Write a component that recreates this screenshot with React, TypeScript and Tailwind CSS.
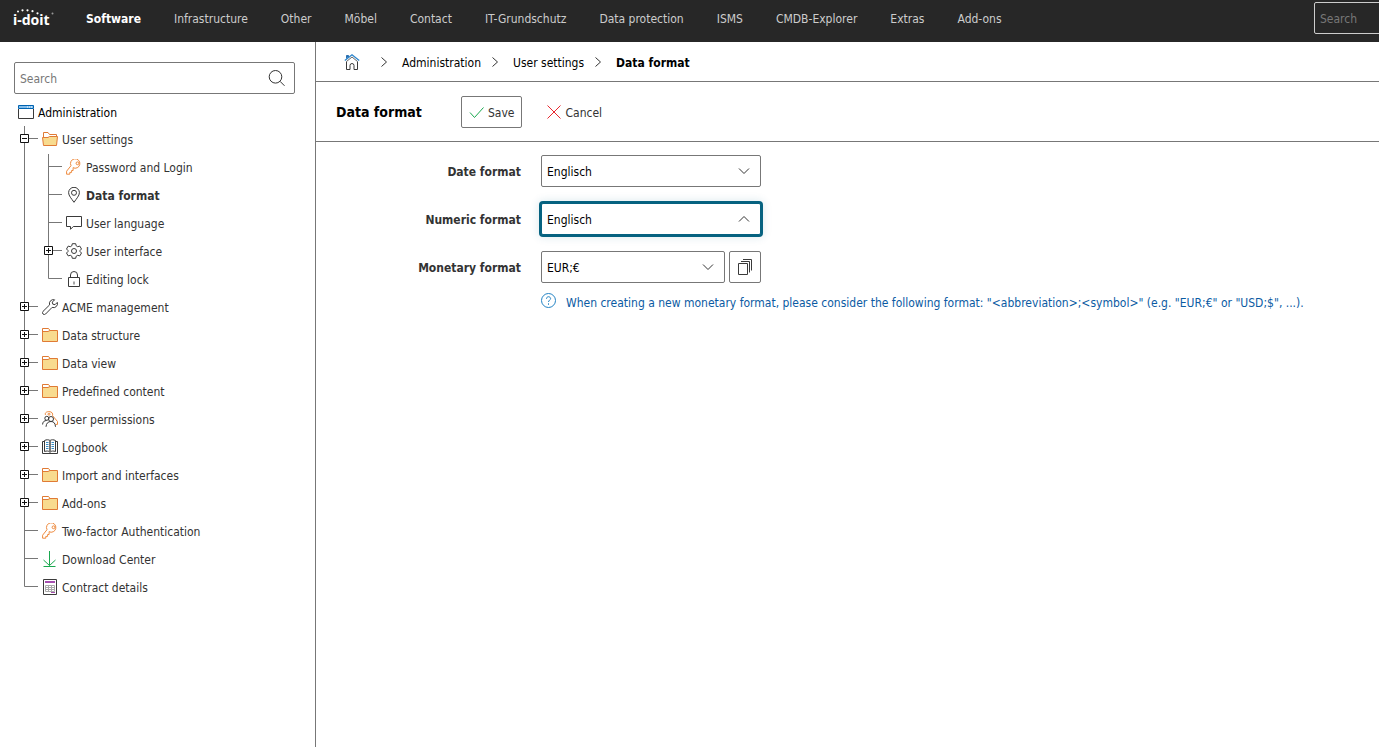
import { useState, type ReactNode } from "react";

const navItems = [
  "Software",
  "Infrastructure",
  "Other",
  "Möbel",
  "Contact",
  "IT-Grundschutz",
  "Data protection",
  "ISMS",
  "CMDB-Explorer",
  "Extras",
  "Add-ons",
];

function Icon({ children, stroke = "#3a3a3a" }: { children: ReactNode; stroke?: string }) {
  return (
    <svg
      className="size-4 shrink-0"
      viewBox="0 0 16 16"
      fill="none"
      stroke={stroke}
      aria-hidden="true"
    >
      {children}
    </svg>
  );
}

const WindowIcon = () => (
  <Icon>
    <path d="M.5 5v9.500h15V5" />
    <path d="M.5 1.500h15v3H.5z" fill="#83beec" stroke="#0063b1" />
    <path d="M9 3h1M11 3h1M13 3h1" stroke="#fff" />
  </Icon>
);
const FolderIcon = () => (
  <Icon stroke="#e07a35">
    <path d="M.5 14.500v-13h6l1.500 2h7.500v11z" fill="#f8db8f" />
    <path d="M1 2h5.300l1 1.500L6 4.500H1z" fill="#fff" stroke="none" />
    <path d="M.5 4.500h5.500l2-1" />
  </Icon>
);
const OpenFolderIcon = () => (
  <Icon stroke="#e07a35">
    <path d="M1.500 6V1.500h4.500l1.500 2h7V6" fill="#fff" />
    <path d="M.5 6.500h5.500l1.500-1h8l-1 9h-13z" fill="#f8db8f" />
  </Icon>
);
const KeyIcon = () => (
  <Icon stroke="#ee8a3e">
    <path d="M7 8.700a4.700 4.700 0 1 0-2-2L.6 12.200v3h3.200v-1.800h1.800v-1.900h1.500V9.600z" strokeLinejoin="round" />
    <circle cx="11.500" cy="4.300" r="1.400" />
  </Icon>
);
const PinIcon = () => (
  <Icon>
    <path d="M8 15.300C5.500 11.600 2.600 8.700 2.600 5.700a5.400 5.400 0 0 1 10.800 0c0 3-2.900 5.900-5.400 9.600z" />
    <circle cx="8" cy="5.800" r="2.500" />
  </Icon>
);
const SpeechIcon = () => (
  <Icon>
    <path d="M.5 1.500h15v10H7.300L4.500 14.300v-2.800h-4z" />
  </Icon>
);
const GearIcon = () => (
  <Icon>
    <path d="M6.300.7h3.400l.5 2.100 1.500.9 2.100-.6 1.700 2.900L14 7.500v1l1.500 1.500-1.700 2.900-2.100-.6-1.500.9-.5 2.100H6.300l-.5-2.100-1.500-.9-2.100.6L.5 10 2 8.500v-1L.5 6l1.700-2.900 2.100.6 1.500-.9z" strokeLinejoin="round" />
    <circle cx="8" cy="8" r="2.500" />
  </Icon>
);
const LockIcon = () => (
  <Icon>
    <path d="M2.500 6.500h11v9h-11z" />
    <path d="M4.500 6.500V4a3.500 3.500 0 0 1 7 0v2.500" />
    <path d="M8 10.500v3" stroke="#888" strokeWidth="1.500" />
  </Icon>
);
const WrenchIcon = () => (
  <Icon>
    <path
      d="M12.600.8a4 4 0 0 0-5 5.100L1 12.400a1.800 1.800 0 0 0 2.600 2.600l6.500-6.600a4 4 0 0 0 5.200-5L13 5.700l-2.200-.5-.5-2.100z"
      strokeLinejoin="round"
    />
  </Icon>
);
const PermissionsIcon = () => (
  <Icon>
    <path d="M3.500 4C2.500 1.500 5 .6 7 .6c3 0 4.200 2 3.500 4l5 5.900v2.900h-2" stroke="#ee8a3e" />
    <circle cx="7" cy="3.200" r="1" stroke="#ee8a3e" />
    <circle cx="4.800" cy="7.300" r="2" />
    <circle cx="9" cy="8" r="2.500" />
    <path d="M.6 13.500c0-2.500 1.600-4 4-4M4 15.800c.3-3.500 2-5.300 5-5.300s4.200 1.800 4.500 5.300" />
  </Icon>
);
const BookIcon = () => (
  <Icon>
    <path d="M2.500 2.500h-2v12h15v-12h-2" />
    <path d="M2.500 1.500c2-1 4-1 5.500 0 1.500-1 3.500-1 5.500 0v11c-2-.7-4-.7-5.500.5-1.500-1.200-3.500-1.200-5.500-.5z" fill="#fff" />
    <path d="M7.500 1.500v12M8.500 1.500v12" stroke="#777" />
    <path d="M4 3.500h2.500M4 5.500h2.500M4 7.500h2.500M4 9.500h2.500M9.500 3.500H12M9.500 5.500H12M9.500 7.500H12M9.500 9.500H12" stroke="#3a8fc8" />
  </Icon>
);
const DownloadIcon = () => (
  <Icon stroke="#1aa84f">
    <path d="M7.500 0v14.500M1.500 9l6 5.500 6-5.500M1.500 15.500h12" />
  </Icon>
);
const ContractIcon = () => (
  <Icon>
    <path d="M1.500.5h13v15h-13z" />
    <path d="M3 3h10" stroke="#a54fb0" strokeWidth="2" />
    <path d="M3.500 6.500h9v6h-9zM3.500 8.500h9M3.500 10.500h9M6.500 6.500v6M9.500 6.500v6" stroke="#aaa" />
    <path d="M9 13.500h4" stroke="#a54fb0" />
  </Icon>
);
const HomeIcon = () => (
  <Icon>
    <path d="M2.500 7.500v8h3.500v-4a2 2 0 0 1 4 0v4h3.500v-8" />
    <path d="M2.500 4.500v-3h2V3" stroke="#2a6fb0" fill="#2a6fb0" />
    <path d="M.8 6.500L8 .8l7.200 5.700" stroke="#2f86cc" strokeWidth="1.300" />
    <path d="M2.500 7.500L8 3l5.500 4.500" stroke="#666" />
  </Icon>
);
const CopyIcon = () => (
  <Icon>
    <path d="M1.500 4.500h9v11h-9zM4 2.500h8.500v11M6 .5h8.500v11" />
  </Icon>
);
const HelpIcon = () => (
  <Icon stroke="#2383c4">
    <circle cx="7.500" cy="7.500" r="7" />
    <path d="M5.500 5.800c0-1.300.9-2.100 2-2.100s2.100.8 2.100 1.900c0 1.500-2.100 1.600-2.100 3.400M7.500 10.300v1.500" />
  </Icon>
);
const CrumbChevron = () => (
  <svg className="h-4 w-2 shrink-0" viewBox="0 0 8 16" fill="none" stroke="#333" aria-hidden="true">
    <path d="M1.500 3.500l5 4.500-5 4.500" />
  </svg>
);

type Node = { label: string; icon: ReactNode; state?: "open" | "closed"; children?: Node[] };

const tree: Node[] = [
  {
    label: "User settings",
    icon: <OpenFolderIcon />,
    state: "open",
    children: [
      { label: "Password and Login", icon: <KeyIcon /> },
      { label: "Data format", icon: <PinIcon /> },
      { label: "User language", icon: <SpeechIcon /> },
      { label: "User interface", icon: <GearIcon />, state: "closed" },
      { label: "Editing lock", icon: <LockIcon /> },
    ],
  },
  { label: "ACME management", icon: <WrenchIcon />, state: "closed" },
  { label: "Data structure", icon: <FolderIcon />, state: "closed" },
  { label: "Data view", icon: <FolderIcon />, state: "closed" },
  { label: "Predefined content", icon: <FolderIcon />, state: "closed" },
  { label: "User permissions", icon: <PermissionsIcon />, state: "closed" },
  { label: "Logbook", icon: <BookIcon />, state: "closed" },
  { label: "Import and interfaces", icon: <FolderIcon />, state: "closed" },
  { label: "Add-ons", icon: <FolderIcon />, state: "closed" },
  { label: "Two-factor Authentication", icon: <KeyIcon /> },
  { label: "Download Center", icon: <DownloadIcon /> },
  { label: "Contract details", icon: <ContractIcon /> },
];

function Branch({ nodes }: { nodes: Node[] }) {
  return (
    <ul>
      {nodes.map((node, index) => (
        <TreeItem key={node.label} node={node} last={index === nodes.length - 1} />
      ))}
    </ul>
  );
}

function TreeItem({ node, last }: { node: Node; last: boolean }) {
  const [open, setOpen] = useState(node.state === "open");
  const active = node.label === "Data format";
  return (
    <li>
      <div className="flex h-7">
        <span className="relative h-7 w-6 shrink-0">
          <svg className="size-full" viewBox="0 0 24 28" fill="none" stroke="#777" aria-hidden="true">
            <path d={last ? "M6.500 0v12.500H20" : "M6.500 0v28M6.500 12.500H20"} />
          </svg>
          {node.state && (
            <button
              type="button"
              aria-label={`${open ? "Collapse" : "Expand"} ${node.label}`}
              onClick={() => setOpen(!open)}
              className="absolute top-2 left-0.5 size-[9px] bg-white"
            >
              <svg className="block size-[9px]" viewBox="0 0 9 9" fill="none" stroke="#111" aria-hidden="true">
                <path d={open ? "M.5.5h8v8h-8zM2 4.500h5" : "M.5.5h8v8h-8zM2 4.500h5M4.500 2v5"} />
              </svg>
            </button>
          )}
        </span>
        <a href="#" className="flex items-center gap-1 pb-0.5">
          {node.icon}
          <span className={active ? "pt-0.5 font-bold" : "pt-0.5"}>{node.label}</span>
        </a>
      </div>
      {node.children && open && (
        <div className={last ? "ml-6" : "ml-1.5 border-l border-[#777] pl-[17px]"}>
          <Branch nodes={node.children} />
        </div>
      )}
    </li>
  );
}

function Select({ id, value, open = false }: { id: string; value: string; open?: boolean }) {
  return (
    <div className="relative flex-1">
      <select
        id={id}
        className={
          open
            ? "block h-8 w-full appearance-none rounded-[2px] border border-[#066280] bg-white pt-0.5 pr-8 pl-[5px] text-black shadow-[0_0_8px_3px_#0662801f] ring-2 ring-[#066280] outline-none"
            : "block h-8 w-full appearance-none rounded-[2px] border border-[#777] bg-white pt-0.5 pr-8 pl-[5px] text-black"
        }
      >
        <option>{value}</option>
      </select>
      <svg
        className="pointer-events-none absolute top-2 right-[9px] size-4"
        viewBox="0 0 16 16"
        fill="none"
        stroke="#333"
        aria-hidden="true"
      >
        <path d={open ? "M3 10.500l5-5 5 5" : "M3 5.500l5 5 5-5"} />
      </svg>
    </div>
  );
}

function Field({ id, label, children }: { id: string; label: string; children: ReactNode }) {
  return (
    <div className="flex items-center gap-5">
      <label htmlFor={id} className="w-[205px] shrink-0 pt-px text-right font-bold">
        {label}
      </label>
      <div className="flex w-[220px] gap-1">{children}</div>
    </div>
  );
}

export default function App() {
  return (
    <div className="flex min-h-screen flex-col overflow-x-hidden bg-white font-['DejaVu_Sans_Condensed','Noto_Sans',sans-serif] text-[12px] leading-4 text-[#333]">
      <header className="flex h-[42px] shrink-0 items-start overflow-hidden bg-[#272727] text-[#ccc]">
        <a
          href="#"
          aria-label="i-doit"
          className="relative mt-2 ml-[13px] w-[57px] shrink-0 font-['Noto_Sans',sans-serif] text-[14px] leading-6 font-bold text-white"
        >
          i-doit
          <svg className="absolute top-0 left-0 h-2 w-11" viewBox="0 0 44 8" fill="#fff" aria-hidden="true">
            <circle cx="5" cy="3.500" r="1" />
            <circle cx="9.500" cy="2.300" r="1.100" />
            <circle cx="14.500" cy="2.300" r="1.100" />
            <circle cx="19.500" cy="3.200" r="1.100" />
            <circle cx="24.500" cy="5.300" r="1.100" />
            <circle cx="39.500" cy="5.500" r="1" fill="#999" />
          </svg>
        </a>
        <nav className="flex shrink-0 gap-px">
          {navItems.map((item, index) => (
            <a
              key={item}
              href="#"
              className={
                index === 0
                  ? "flex h-[38px] items-center px-4 font-bold text-white"
                  : "flex h-[38px] items-center px-4"
              }
            >
              {item}
            </a>
          ))}
        </nav>
        <input
          type="search"
          aria-label="Global search"
          placeholder="Search"
          className="mt-0.5 -mr-[115px] ml-auto h-8 w-[180px] shrink-0 rounded-[2px] border border-[#ccc] bg-transparent px-[5px] pt-0.5 placeholder:text-[#777]"
        />
      </header>

      <div className="flex flex-1">
        <aside className="w-[316px] shrink-0 border-r border-[#777] pt-5 pl-3.5">
          <div className="relative mr-5">
            <input
              type="search"
              aria-label="Search"
              placeholder="Search"
              className="block h-8 w-full rounded-[2px] border border-[#777] pt-0.5 pr-8 pl-[5px] placeholder:text-[#777]"
            />
            <svg className="absolute top-2 right-[9px] size-[18px]" viewBox="0 0 18 18" fill="none" stroke="#333" aria-hidden="true">
              <circle cx="7.500" cy="6.800" r="6.300" />
              <path d="M12 11.300l4.500 4.500" />
            </svg>
          </div>
          <div className="pt-1 pl-1">
            <a href="#" className="flex h-7 items-center gap-1 text-black">
              <WindowIcon />
              <span className="pt-px">Administration</span>
            </a>
            <Branch nodes={tree} />
          </div>
        </aside>

        <main className="min-w-0 flex-1">
          <nav aria-label="Breadcrumb" className="flex h-10 items-center border-b border-[#777] pt-px pl-7 text-black">
            <a href="#" aria-label="Home">
              <HomeIcon />
            </a>
            <span className="flex items-center gap-3.5 pl-5">
              <CrumbChevron />
              <a href="#" className="pt-0.5">Administration</a>
            </span>
            <span className="flex items-center gap-3.5 pl-2.5">
              <CrumbChevron />
              <a href="#" className="pt-0.5">User settings</a>
            </span>
            <span className="flex items-center gap-3.5 pl-2.5">
              <CrumbChevron />
              <span className="pt-0.5 font-bold">Data format</span>
            </span>
          </nav>

          <div className="flex h-[60px] items-center border-b border-[#777] pl-5">
            <h1 className="w-[125px] text-[14px] leading-5 font-bold text-black">Data format</h1>
            <button type="button" className="flex h-8 items-center gap-1 rounded-[2px] border border-[#777] px-1.5">
              <Icon stroke="#1aa84f">
                <path d="M2 8.500l4.500 5L15.500 3.500" />
              </Icon>
              <span className="pt-0.5">Save</span>
            </button>
            <button type="button" className="ml-4 flex h-8 items-center gap-1 px-2">
              <Icon stroke="#e8262d">
                <path d="M1.500 1.500l13 13M14.500 1.500l-13 13" />
              </Icon>
              <span className="pt-0.5">Cancel</span>
            </button>
          </div>

          <form className="flex flex-col gap-4 pt-[13px]">
            <Field id="date" label="Date format">
              <Select id="date" value="Englisch" />
            </Field>
            <Field id="numeric" label="Numeric format">
              <Select id="numeric" value="Englisch" open />
            </Field>
            <div>
              <Field id="monetary" label="Monetary format">
                <Select id="monetary" value="EUR;€" />
                <button
                  type="button"
                  aria-label="Copy"
                  className="flex size-8 items-center justify-center rounded-[2px] border border-[#777]"
                >
                  <CopyIcon />
                </button>
              </Field>
              <p className="mt-2.5 flex items-start gap-[9px] pl-[225px] text-[#0b5ba3]">
                <HelpIcon />
                <span className="pt-0.5">
                  When creating a new monetary format, please consider the following format:
                  "&lt;abbreviation&gt;;&lt;symbol&gt;" (e.g. "EUR;€" or "USD;$", ...).
                </span>
              </p>
            </div>
          </form>
        </main>
      </div>
    </div>
  );
}
